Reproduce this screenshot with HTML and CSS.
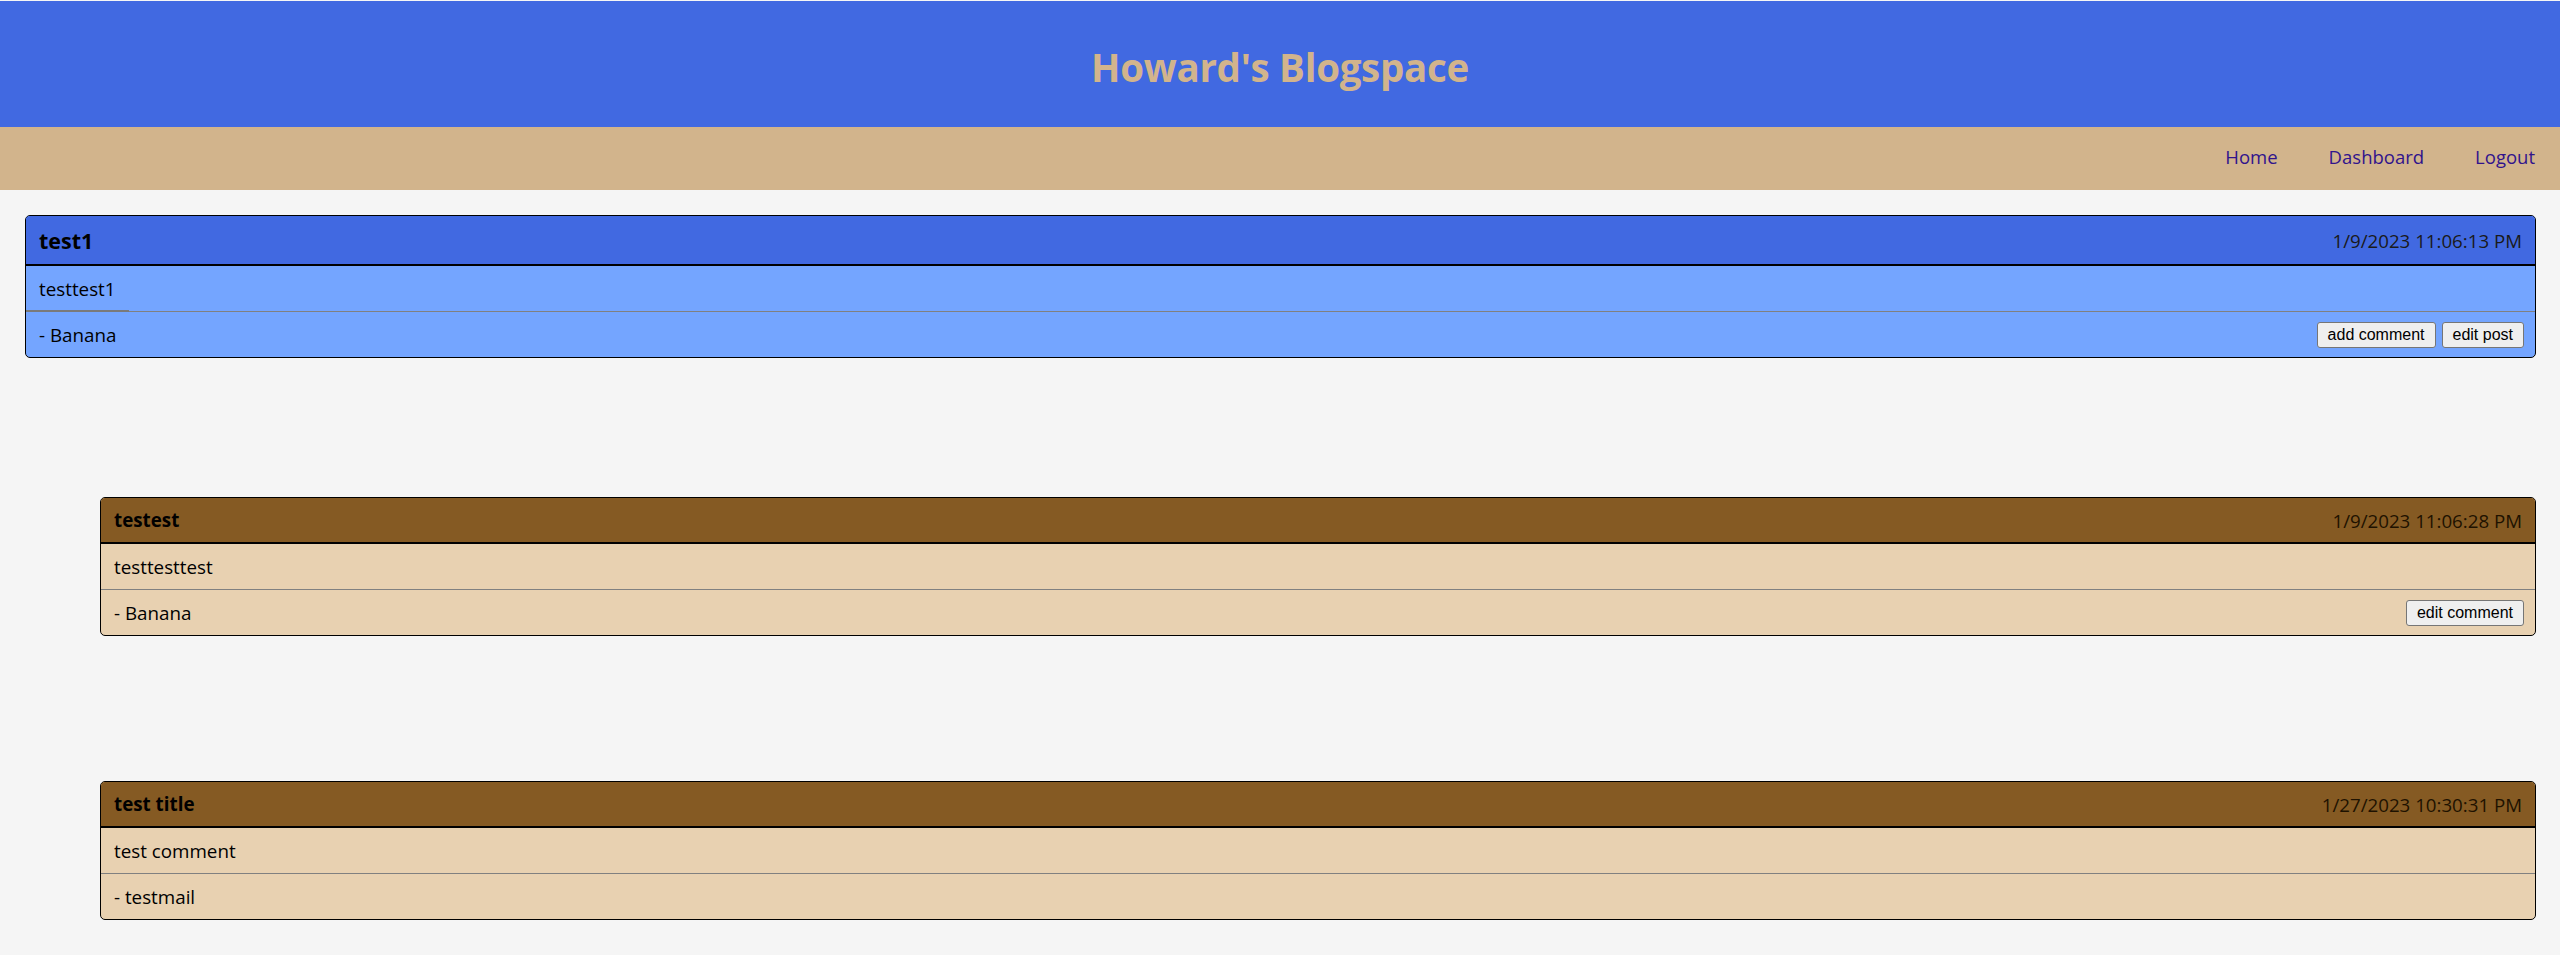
FILE: index.html
```html
<!DOCTYPE html>
<html lang="en">
<head>
<meta charset="utf-8">
<title>Howard's Blogspace</title>
<link rel="stylesheet" href="styles.css">
</head>
<body>
<header class="site-header">
  <h1 class="site-title">Howard's Blogspace</h1>
</header>
<nav class="site-nav">
  <a class="nav-link" href="#">Home</a>
  <a class="nav-link" href="#">Dashboard</a>
  <a class="nav-link" href="#">Logout</a>
</nav>
<main class="content">
  <article class="card post">
    <div class="card-head">
      <h3 class="card-title">test1</h3>
      <span class="card-date">1/9/2023 11:06:13 PM</span>
    </div>
    <div class="card-body marked">
      <span class="body-text">testtest1</span>
      <span class="body-mark"></span>
    </div>
    <div class="card-foot">
      <span class="card-author">- Banana</span>
      <div class="actions">
        <button class="btn" type="button">add comment</button>
        <button class="btn" type="button">edit post</button>
      </div>
    </div>
  </article>

  <article class="card comment first-comment">
    <div class="card-head">
      <h4 class="card-title">testest</h4>
      <span class="card-date">1/9/2023 11:06:28 PM</span>
    </div>
    <div class="card-body">testtesttest</div>
    <div class="card-foot">
      <span class="card-author">- Banana</span>
      <div class="actions">
        <button class="btn" type="button">edit comment</button>
      </div>
    </div>
  </article>

  <article class="card comment next-comment">
    <div class="card-head">
      <h4 class="card-title">test title</h4>
      <span class="card-date">1/27/2023 10:30:31 PM</span>
    </div>
    <div class="card-body">test comment</div>
    <div class="card-foot">
      <span class="card-author">- testmail</span>
    </div>
  </article>
</main>
</body>
</html>
```
FILE: styles.css
```css
html, body {
  margin: 0;
  padding: 0;
}

body {
  background: #f5f5f5;
  font-family: "Open Sans", "Noto Sans", Arial, sans-serif;
  font-size: 18.8px;
  color: #000;
}

.site-header {
  margin-top: 1px;
  height: 126px;
  background: #4169e1;
  display: flex;
  align-items: center;
  justify-content: center;
}

.site-title {
  margin: 6px 0 0 0;
  font-size: 38.5px;
  font-weight: 700;
  color: #d2b48c;
  letter-spacing: -0.3px;
}

.site-nav {
  height: 63px;
  background: #d2b48c;
  display: flex;
  justify-content: flex-end;
  align-items: center;
  gap: 51px;
  padding-right: 25px;
}

.nav-link {
  color: #30138c;
  text-decoration: none;
  font-size: 18.5px;
  padding-bottom: 4px;
}

.content {
  padding: 25px 24px 30px 25px;
}

.card {
  border: 1px solid #000;
  border-radius: 5px;
  overflow: hidden;
}

.post {
  background: #74a5ff;
}

.post .card-head {
  background: #4169e1;
  height: 48px;
}

.comment {
  background: #e8d1b1;
  margin-left: 75px;
}

.comment .card-head {
  background: #855a23;
  height: 44px;
}

.first-comment {
  margin-top: 139px;
}

.next-comment {
  margin-top: 145px;
}

.card-head {
  display: flex;
  justify-content: space-between;
  align-items: center;
  padding: 0 13px 0 13px;
  border-bottom: 2px solid #000;
}

.card-title {
  margin: 0;
  font-weight: 700;
  color: #000;
}

.post .card-title {
  font-size: 21.5px;
}

.comment .card-title {
  font-size: 18.8px;
}

.card-date {
  color: #1a1a1a;
  font-size: 18.7px;
}

.comment .card-date {
  color: #1e1200;
}

.card-body {
  height: 45px;
  display: flex;
  align-items: center;
  padding: 0 13px;
  border-bottom: 1px solid #808080;
}

.card-body.marked {
  flex-direction: column;
  align-items: flex-start;
  padding: 0;
}

.body-text {
  margin: auto 0;
  padding: 1px 13px 0;
}

.body-mark {
  display: block;
  width: 103px;
  height: 2px;
  margin-bottom: -1px;
  background: #7a7a7a;
}

.card-foot {
  height: 45px;
  display: flex;
  justify-content: space-between;
  align-items: center;
  padding: 0 11px 0 13px;
}

.actions {
  display: flex;
  gap: 6px;
}

.btn {
  font-family: Arial, "Liberation Sans", sans-serif;
  font-size: 16px;
  height: 26px;
  padding: 0 10px;
  background: #efefef;
  color: #000;
  border: 1px solid #767676;
  border-radius: 3px;
  line-height: 24px;
}
```
